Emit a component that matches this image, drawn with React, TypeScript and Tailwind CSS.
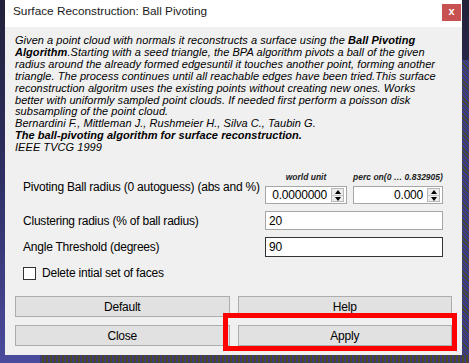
const desc = "font-['Liberation_Sans',sans-serif] italic text-[11px] tracking-[0.05px] leading-[11.9px] text-black whitespace-nowrap"
const label = "font-['Liberation_Sans',sans-serif] text-[12px] tracking-[-0.22px] text-black"

function SpinBox({ value, className }: { value: string; className: string }) {
  return (
    <div className={`flex h-[18px] items-center border border-[#a6a6a6] bg-white ${className}`}>
      <span className={`${label} flex-1 pr-[4px] text-right leading-none`}>{value}</span>
      <div className="mr-[2px] flex h-[14px] w-[13px] flex-col border border-[#b8b8b8] bg-[#ececec]">
        <div className="flex h-1/2 items-center justify-center">
          <div className="h-0 w-0 border-x-[3.5px] border-b-[4px] border-x-transparent border-b-black" />
        </div>
        <div className="flex h-1/2 items-center justify-center border-t border-[#c8c8c8]">
          <div className="h-0 w-0 border-x-[3.5px] border-t-[4px] border-x-transparent border-t-black" />
        </div>
      </div>
    </div>
  )
}

function Btn({ children }: { children: string }) {
  return (
    <button className={`${label} h-[21px] flex-1 border border-[#adadad] bg-[#e1e1e1] leading-none`}>
      {children}
    </button>
  )
}

export default function App() {
  return (
    <div className="relative h-[363px] w-[469px] overflow-hidden bg-gradient-to-b from-[#22223a] via-[#2f2f66] to-[#4b4b9e]">
      {/* desktop texture on the right and bottom */}
      <div className="absolute right-0 top-[60px] h-[303px] w-[7px] bg-[repeating-linear-gradient(45deg,#3b3b8c_0px,#3b3b8c_2px,#4a4a2a_2px,#4a4a2a_3px)]" />
      <div className="absolute bottom-0 left-[40px] h-[8px] w-[429px] bg-[repeating-linear-gradient(90deg,#3b3b7c_0px,#3b3b7c_2px,#4d4a22_2px,#4d4a22_4px)]" />

      {/* dialog window */}
      <div className="absolute left-[5px] top-0 flex h-[355px] w-[457px] flex-col bg-[#f0f0f0]">
        <div className="relative flex h-[27px] items-start bg-white pl-[8px] pt-[3px]">
          <span className="font-['Liberation_Sans',sans-serif] text-[11.8px] text-[#1a1a1a]">
            Surface Reconstruction: Ball Pivoting
          </span>
          <div className="absolute right-[1px] top-[4px] flex h-[17px] w-[19px] items-center justify-center bg-[#c75050] pb-[2px] font-['Liberation_Sans',sans-serif] text-[11px] font-bold text-white">
            x
          </div>
        </div>

        <div className="flex flex-1 flex-col px-[10px] pt-[8px]">
          <div className={desc}>
            <div>
              Given a point cloud with normals it reconstructs a surface using the <b>Ball Pivoting</b>
            </div>
            <div>
              <b>Algorithm</b>.Starting with a seed triangle, the BPA algorithm pivots a ball of the given
            </div>
            <div>radius around the already formed edgesuntil it touches another point, forming another</div>
            <div>triangle. The process continues until all reachable edges have been tried.This surface</div>
            <div>reconstruction algoritm uses the existing points without creating new ones. Works</div>
            <div>better with uniformly sampled point clouds. If needed first perform a poisson disk</div>
            <div>subsampling of the point cloud.</div>
            <div>Bernardini F., Mittleman J., Rushmeier H., Silva C., Taubin G.</div>
            <div>
              <b>The ball-pivoting algorithm for surface reconstruction.</b>
            </div>
            <div>IEEE TVCG 1999</div>
          </div>

          <div className="mt-[15px] flex items-center pl-[8px]">
            <span className={`${label} w-[242px]`}>Pivoting Ball radius (0 autoguess) (abs and %)</span>
            <div className="flex flex-col">
              <div className="flex h-[17px] items-center font-['Liberation_Sans',sans-serif] text-[8.5px] italic font-bold text-[#222]">
                <span className="w-[82px] text-center">world unit</span>
                <span className="ml-[6px] w-[90px] text-center">perc on(0 … 0.832905)</span>
              </div>
              <div className="flex">
                <SpinBox value="0.0000000" className="w-[82px]" />
                <SpinBox value="0.000" className="ml-[6px] w-[90px]" />
              </div>
            </div>
          </div>

          <div className="mt-[7px] flex items-center pl-[8px]">
            <span className={`${label} w-[242px]`}>Clustering radius (% of ball radius)</span>
            <div className={`${label} flex h-[19px] w-[178px] items-center border border-[#a6a6a6] bg-white pl-[3px]`}>20</div>
          </div>

          <div className="mt-[7px] flex items-center pl-[8px]">
            <span className={`${label} w-[242px]`}>Angle Threshold (degrees)</span>
            <div className={`${label} flex h-[20px] w-[178px] items-center border border-[#333] bg-white pl-[3px]`}>90</div>
          </div>

          <div className="mt-[7px] flex items-center pl-[8px]">
            <div className="h-[13px] w-[13px] border border-[#333] bg-white" />
            <span className={`${label} ml-[6px]`}>Delete intial set of faces</span>
          </div>

          <div className="mt-[14px] flex gap-[8px]">
            <Btn>Default</Btn>
            <Btn>Help</Btn>
          </div>
          <div className="mt-[8px] flex gap-[8px]">
            <Btn>Close</Btn>
            <Btn>Apply</Btn>
          </div>
        </div>
      </div>

      {/* red highlight around Apply */}
      <div className="absolute left-[223px] top-[313px] h-[38px] w-[234px] border-[5px] border-[#ff0000]" />
    </div>
  )
}
